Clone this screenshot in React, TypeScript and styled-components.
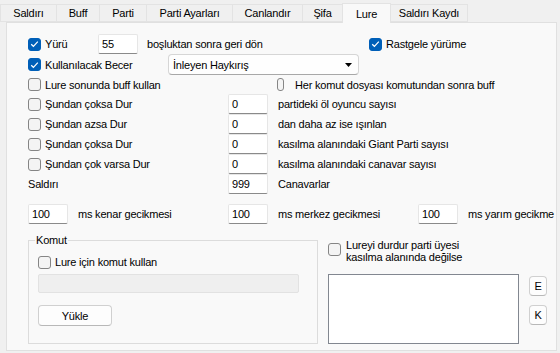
import React from "react";
import styled, { createGlobalStyle } from "styled-components";

const GlobalStyle = createGlobalStyle`
  html, body {
    margin: 0;
    padding: 0;
    background: #f0f0f0;
  }
  body {
    font-family: "Liberation Sans", Arial, sans-serif;
    font-size: 11px;
    letter-spacing: -0.2px;
    color: #000;
  }
`;

const Window = styled.div`
  width: 560px;
  height: 353px;
  box-sizing: border-box;
  padding-top: 3px;
  overflow: hidden;
  background: #f0f0f0;
`;

const TabStrip = styled.div`
  display: flex;
  align-items: flex-end;
  height: 19px;
  position: relative;
  z-index: 1;
`;

const Tab = styled.div<{ $w: number; $active?: boolean }>`
  flex: none;
  box-sizing: border-box;
  width: ${(p) => p.$w}px;
  height: ${(p) => (p.$active ? 20 : 18)}px;
  margin-bottom: ${(p) => (p.$active ? -1 : 0)}px;
  background: ${(p) => (p.$active ? "#f9f9f9" : "#f0f0f0")};
  border: 1px solid #e3e3e3;
  border-bottom: ${(p) => (p.$active ? "none" : "1px solid #e3e3e3")};
  margin-left: -1px;
  display: flex;
  align-items: center;
  justify-content: center;
  white-space: nowrap;
  &:first-child {
    margin-left: 0;
  }
`;

const Panel = styled.div`
  margin-left: 6px;
  width: 551px;
  height: 329px;
  box-sizing: border-box;
  border: 1px solid #e0e0e0;
  background: #f9f9f9;
  padding: 11px 0 0 21px;
`;

const Row = styled.div<{ $h?: number; $mt?: number }>`
  display: flex;
  align-items: center;
  height: ${(p) => p.$h ?? 20}px;
  margin-top: ${(p) => p.$mt ?? 0}px;
`;

const Cell = styled.div<{ $w?: number; $ml?: number }>`
  flex: none;
  ${(p) => (p.$w ? `width: ${p.$w}px;` : "")}
  margin-left: ${(p) => p.$ml ?? 0}px;
  display: flex;
  align-items: center;
  white-space: nowrap;
`;

const TextBox = styled.div<{ $w?: number; $h?: number; $ml?: number }>`
  flex: none;
  box-sizing: border-box;
  width: ${(p) => p.$w ?? 40}px;
  height: ${(p) => p.$h ?? 20}px;
  margin-left: ${(p) => p.$ml ?? 0}px;
  background: #fff;
  border: 1px solid #e6e6e6;
  border-bottom-color: #8a8a8a;
  border-radius: 2px;
  padding-left: 3px;
  display: flex;
  align-items: center;
`;

const Combo = styled.div`
  flex: none;
  box-sizing: border-box;
  width: 191px;
  height: 21px;
  background: #fefefe;
  border: 1px solid #d6d6d6;
  border-bottom-color: #a8a8a8;
  border-radius: 4px;
  padding: 0 6px 0 4px;
  display: flex;
  align-items: center;
  justify-content: space-between;
`;

const Box = styled.span<{ $on?: boolean; $w?: number; $mt?: number }>`
  flex: none;
  box-sizing: border-box;
  width: ${(p) => p.$w ?? 13}px;
  height: 13px;
  margin-top: ${(p) => p.$mt ?? 0}px;
  border-radius: 3px;
  background: ${(p) => (p.$on ? "#005fb8" : "#f4f4f4")};
  border: 1px solid ${(p) => (p.$on ? "#005fb8" : "#858585")};
  display: flex;
  align-items: center;
  justify-content: center;
`;

const CheckLabel = styled.label<{ $gap?: number; $top?: boolean }>`
  display: flex;
  align-items: ${(p) => (p.$top ? "flex-start" : "center")};
  gap: ${(p) => p.$gap ?? 4}px;
  white-space: nowrap;
  line-height: 12px;
`;

const Bottom = styled.div`
  display: flex;
  margin-top: 10px;
`;

const Group = styled.fieldset`
  margin: 0;
  width: 290px;
  height: 110px;
  box-sizing: border-box;
  border: 1px solid #dcdcdc;
  padding: 0 6px;
  min-width: 0;
`;

const Legend = styled.legend`
  padding: 0 1px;
  line-height: 13px;
`;

const GroupBody = styled.div`
  display: flex;
  flex-direction: column;
  padding-left: 3px;
`;

const DisabledBox = styled.div`
  box-sizing: border-box;
  width: 261px;
  height: 19px;
  margin-top: 5px;
  background: #efefef;
  border: 1px solid #e2e2e2;
  border-radius: 2px;
`;

const Button = styled.div<{ $w: number; $h: number; $mt?: number }>`
  box-sizing: border-box;
  width: ${(p) => p.$w}px;
  height: ${(p) => p.$h}px;
  margin-top: ${(p) => p.$mt ?? 0}px;
  background: #fdfdfd;
  border: 1px solid #d0d0d0;
  border-bottom-color: #b8b8b8;
  border-radius: 4px;
  display: flex;
  align-items: center;
  justify-content: center;
`;

const RightCol = styled.div`
  margin-left: 10px;
  padding-top: 5px;
  display: flex;
  flex-direction: column;
`;

const ListRow = styled.div`
  display: flex;
  gap: 10px;
  margin-top: 11px;
`;

const ListBox = styled.div`
  width: 191px;
  height: 70px;
  box-sizing: border-box;
  background: #fff;
  border: 1px solid #828790;
`;

const SideButtons = styled.div`
  display: flex;
  flex-direction: column;
  gap: 9px;
  padding-top: 2px;
`;

function Check({
  on,
  children,
  gap,
  boxW,
}: {
  on?: boolean;
  children: React.ReactNode;
  gap?: number;
  boxW?: number;
}) {
  return (
    <CheckLabel $gap={gap}>
      <Box $on={on} $w={boxW}>
        {on && (
          <svg width="9" height="8" viewBox="0 0 9 8">
            <polyline points="1.2,4.2 3.4,6.3 7.8,1.6" fill="none" stroke="#fff" strokeWidth="1.2" />
          </svg>
        )}
      </Box>
      <span>{children}</span>
    </CheckLabel>
  );
}

const tabs: [string, number][] = [
  ["Saldırı", 57],
  ["Buff", 44],
  ["Parti", 48],
  ["Parti Ayarları", 87],
  ["Canlandır", 71],
  ["Şifa", 41],
  ["Lure", 49],
  ["Saldırı Kaydı", 78],
];

const stopRows: [string, string, string, boolean][] = [
  ["Şundan çoksa Dur", "0", "partideki öl oyuncu sayısı", true],
  ["Şundan azsa Dur", "0", "dan daha az ise ışınlan", true],
  ["Şundan çoksa Dur", "0", "kasılma alanındaki Giant Parti sayısı", true],
  ["Şundan çok varsa Dur", "0", "kasılma alanındaki canavar sayısı", true],
  ["Saldırı", "999", "Canavarlar", false],
];

export default function App() {
  return (
    <Window>
      <GlobalStyle />
      <TabStrip>
        {tabs.map(([t, w]) => (
          <Tab key={t} $w={w} $active={t === "Lure"}>
            {t}
          </Tab>
        ))}
      </TabStrip>
      <Panel>
        <Row>
          <Cell $w={70}>
            <Check on>Yürü</Check>
          </Cell>
          <TextBox>55</TextBox>
          <Cell $w={222} $ml={9}>
            boşluktan sonra geri dön
          </Cell>
          <Check on>Rastgele yürüme</Check>
        </Row>
        <Row $h={21}>
          <Cell $w={140}>
            <Check on>Kullanılacak Becer</Check>
          </Cell>
          <Combo>
            <span>İnleyen Haykırış</span>
            <svg width="7" height="4" viewBox="0 0 7 4">
              <path d="M0 0 H7 L3.5 4 Z" fill="#000" />
            </svg>
          </Combo>
        </Row>
        <Row $h={19}>
          <Cell $w={249}>
            <Check>Lure sonunda buff kullan</Check>
          </Cell>
          <Check boxW={7} gap={11}>
            Her komut dosyası komutundan sonra buff
          </Check>
        </Row>
        {stopRows.map(([label, val, text, isCheck], i) => (
          <Row key={i}>
            <Cell $w={200}>{isCheck ? <Check>{label}</Check> : label}</Cell>
            <TextBox>{val}</TextBox>
            <Cell $ml={10}>{text}</Cell>
          </Row>
        ))}
        <Row $mt={10}>
          <TextBox>100</TextBox>
          <Cell $w={150} $ml={10}>
            ms kenar gecikmesi
          </Cell>
          <TextBox>100</TextBox>
          <Cell $w={140} $ml={10}>
            ms merkez gecikmesi
          </Cell>
          <TextBox>100</TextBox>
          <Cell $ml={10}>ms yarım gecikme</Cell>
        </Row>
        <Bottom>
          <Group>
            <Legend>Komut</Legend>
            <GroupBody>
              <Row $h={14} $mt={8}>
                <Check>Lure için komut kullan</Check>
              </Row>
              <DisabledBox />
              <Button $w={74} $h={21} $mt={12}>
                Yükle
              </Button>
            </GroupBody>
          </Group>
          <RightCol>
            <CheckLabel $top $gap={5}>
              <Box $mt={4} />
              <span>
                Lureyi durdur parti üyesi
                <br />
                kasılma alanında değilse
              </span>
            </CheckLabel>
            <ListRow>
              <ListBox />
              <SideButtons>
                <Button $w={18} $h={20}>
                  E
                </Button>
                <Button $w={18} $h={20}>
                  K
                </Button>
              </SideButtons>
            </ListRow>
          </RightCol>
        </Bottom>
      </Panel>
    </Window>
  );
}
